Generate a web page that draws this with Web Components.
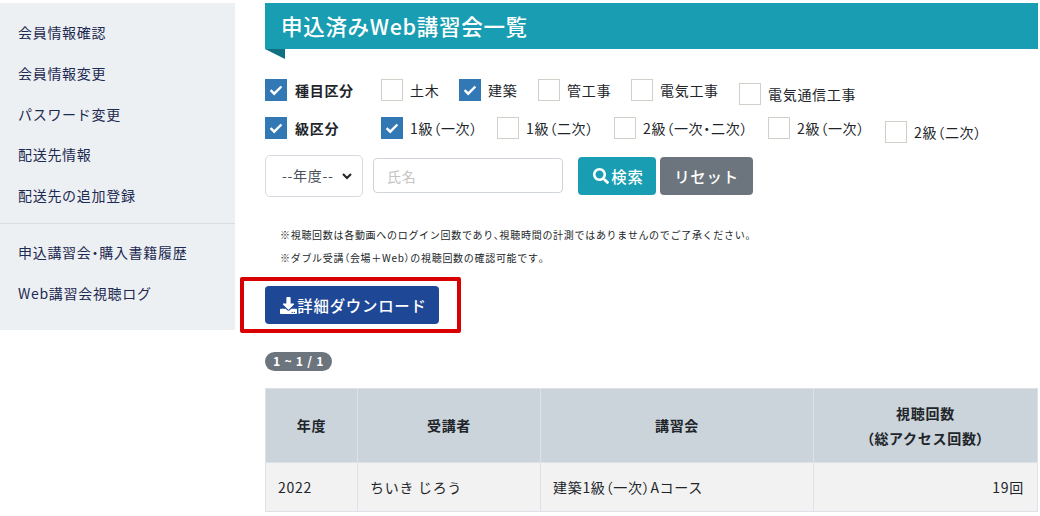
<!DOCTYPE html>
<html lang="ja">
<head>
<meta charset="utf-8">
<title>申込済みWeb講習会一覧</title>
<style>
  html, body { margin: 0; padding: 0; background: #fff; overflow: hidden; }
  body {
    font-family: "Noto Sans CJK JP", "Noto Sans", sans-serif;
    font-size: 14px;
    letter-spacing: 0.05em;
    color: #212529;
  }
</style>
</head>
<body>
<app-shell>
  <side-nav slot="side">
    <nav-link>会員情報確認</nav-link>
    <nav-link>会員情報変更</nav-link>
    <nav-link>パスワード変更</nav-link>
    <nav-link>配送先情報</nav-link>
    <nav-link>配送先の追加登録</nav-link>
    <nav-link divider>申込講習会・購入書籍履歴</nav-link>
    <nav-link>Web講習会視聴ログ</nav-link>
  </side-nav>

  <title-banner>申込済みWeb講習会一覧</title-banner>

  <check-row>
    <check-item width="116" checked bold>種目区分</check-item>
    <check-item width="78">土木</check-item>
    <check-item width="79" checked>建築</check-item>
    <check-item width="93">管工事</check-item>
    <check-item width="108">電気工事</check-item>
    <check-item low>電気通信工事</check-item>
  </check-row>
  <check-row>
    <check-item width="116" checked bold>級区分</check-item>
    <check-item width="116" checked>1級（一次）</check-item>
    <check-item width="117">1級（二次）</check-item>
    <check-item width="154">2級（一次・二次）</check-item>
    <check-item width="117">2級（一次）</check-item>
    <check-item low>2級（二次）</check-item>
  </check-row>

  <search-bar></search-bar>

  <note-list>
    <p>※視聴回数は各動画へのログイン回数であり、視聴時間の計測ではありませんのでご了承ください。</p>
    <p>※ダブル受講（会場＋Web）の視聴回数の確認可能です。</p>
  </note-list>

  <download-button>詳細ダウンロード</download-button>

  <count-badge>1 ~ 1 / 1</count-badge>

  <log-table></log-table>
</app-shell>

<script>
// only the punctuation is set tight, kana and kanji keep their full width
const tight = (s) => s.replace(/[（）・、。]/g, `<span style="font-feature-settings:'palt'">$&</span>`);

class AppShell extends HTMLElement {
  constructor() {
    super();
    this.attachShadow({ mode: 'open' });
    this.shadowRoot.innerHTML = `
      <style>
        :host { display: flex; align-items: flex-start; width: 1040px; padding-top: 3px; box-sizing: border-box; }
        .side { flex: 0 0 235px; }
        main { flex: 0 0 773px; margin-left: 30px; min-width: 0; }
      </style>
      <div class="side"><slot name="side"></slot></div>
      <main><slot></slot></main>
    `;
  }
}

class SideNav extends HTMLElement {
  constructor() {
    super();
    this.attachShadow({ mode: 'open' });
    this.shadowRoot.innerHTML = `
      <style>
        :host { display: block; height: 327px; padding-top: 9.6px; box-sizing: border-box; background: #edf0f3; }
      </style>
      <slot></slot>
    `;
  }
}

class NavLink extends HTMLElement {
  constructor() {
    super();
    this.attachShadow({ mode: 'open' });
    this.shadowRoot.innerHTML = `
      <style>
        :host { display: block; padding: 9.8px 18px; line-height: 21px; color: #1d2a52; }
        :host([divider]) { margin-top: 7px; padding-top: 18.6px; border-top: 1px solid #d8dde2; }
      </style>
      <slot></slot>
    `;
  }
}

class TitleBanner extends HTMLElement {
  constructor() {
    super();
    this.attachShadow({ mode: 'open' });
    this.shadowRoot.innerHTML = `
      <style>
        :host { display: block; position: relative; height: 46px; padding-left: 16px; margin-bottom: 30px; background: #189db2; color: #fff; font-size: 21.5px; font-weight: 500; line-height: 46px; }
        .tail { position: absolute; left: 0; top: 100%; width: 0; height: 0; border-top: 10px solid #11707f; border-left: 20px solid transparent; }
      </style>
      <slot></slot><span class="tail"></span>
    `;
  }
}

class CheckRow extends HTMLElement {
  constructor() {
    super();
    this.attachShadow({ mode: 'open' });
    this.shadowRoot.innerHTML = `
      <style>
        :host { display: flex; align-items: flex-start; height: 26px; margin-bottom: 12px; }
      </style>
      <slot></slot>
    `;
  }
}

class CheckItem extends HTMLElement {
  constructor() {
    super();
    this.attachShadow({ mode: 'open' });
    const checked = this.hasAttribute('checked');
    this.shadowRoot.innerHTML = `
      <style>
        :host { display: flex; align-items: center; flex: none; gap: 7px; height: 22px; line-height: 22px; white-space: nowrap; }
        :host([bold]) { font-weight: 700; gap: 8px; }
        :host([low]) { margin-top: 4px; }
        .box { flex: none; width: 22px; height: 22px; box-sizing: border-box; border: 1px solid #d2cec8; background: #fff; }
        .box.on { border-color: #3278b4; background: #3278b4; }
        svg { display: block; width: 20px; height: 20px; }
      </style>
      <span class="box ${checked ? 'on' : ''}">
        ${checked ? '<svg viewBox="0 0 20 20"><path d="M4.6 10.2l3.6 3.5 7.2-7.2" fill="none" stroke="#fff" stroke-width="2.4"/></svg>' : ''}
      </span>
      <span><slot></slot></span>
    `;
    if (this.getAttribute('width')) this.style.width = this.getAttribute('width') + 'px';
  }
}

class SearchBar extends HTMLElement {
  constructor() {
    super();
    this.attachShadow({ mode: 'open' });
    this.shadowRoot.innerHTML = `
      <style>
        :host { display: flex; align-items: flex-start; margin-bottom: 30px; font-size: 14px; }
        .pick { position: relative; display: block; width: 98px; height: 42px; }
        .pick svg { position: absolute; right: 9px; top: 16px; width: 14px; height: 10px; fill: none; stroke: #212529; stroke-width: 2.1; pointer-events: none; }
        select {
          appearance: none; display: block;
          width: 98px; height: 42px; padding: 0 6px 2px 16px; box-sizing: border-box;
          border: 1px solid #d5dae0; border-radius: 5px; background: #fff; color: #495057;
          font: inherit; letter-spacing: 0.05em;
        }
        input {
          width: 190px; height: 35px; margin: 3px 0 0 10px; padding: 0 13px; box-sizing: border-box;
          border: 1px solid #ced4da; border-radius: 4px; background: #fff;
          font: inherit; letter-spacing: 0.05em;
        }
        input::placeholder { color: #c4c4c4; opacity: 1; }
        button {
          display: flex; align-items: center; justify-content: center; gap: 2px;
          height: 38px; margin-top: 2px; padding: 0; border: 0; border-radius: 4px; color: #fff;
          font: 500 15.4px "Noto Sans CJK JP", "Noto Sans", sans-serif; letter-spacing: 0.05em;
        }
        .search { width: 78px; margin-left: 15px; padding-left: 3px; background: #189db2; }
        .reset { width: 93px; margin-left: 4px; background: #6c757d; }
        button svg { width: 16px; height: 16px; fill: #fff; }
      </style>
      <span class="pick">
        <select><option>--年度--</option></select>
        <svg viewBox="0 0 14 10"><path d="M3 3l4 4 4-4"/></svg>
      </span>
      <input type="text" placeholder="氏名">
      <button class="search" type="button">
        <svg viewBox="0 0 512 512"><path d="M505 442.7L405.3 343c-4.5-4.5-10.6-7-17-7H372c27.6-35.3 44-79.7 44-128C416 93.1 322.9 0 208 0S0 93.1 0 208s93.1 208 208 208c48.3 0 92.7-16.4 128-44v16.3c0 6.4 2.5 12.5 7 17l99.7 99.7c9.4 9.4 24.6 9.4 33.9 0l28.3-28.3c9.4-9.4 9.4-24.6.1-34zM208 336c-70.7 0-128-57.2-128-128 0-70.7 57.2-128 128-128 70.7 0 128 57.2 128 128 0 70.7-57.2 128-128 128z"/></svg>検索
      </button>
      <button class="reset" type="button">リセット</button>
    `;
  }
}

class NoteList extends HTMLElement {
  constructor() {
    super();
    this.attachShadow({ mode: 'open' });
    this.shadowRoot.innerHTML = `
      <style>
        :host { display: block; margin-bottom: 21px; padding-left: 15px; font-size: 10px; line-height: 15px; }
        ::slotted(p) { margin: 0 0 8px; }
        ::slotted(p:last-child) { margin-bottom: 0; }
      </style>
      <slot></slot>
    `;
  }
}

class DownloadButton extends HTMLElement {
  constructor() {
    super();
    this.attachShadow({ mode: 'open' });
    this.shadowRoot.innerHTML = `
      <style>
        :host { display: block; position: relative; width: 174px; margin-bottom: 28px; }
        button {
          display: flex; align-items: center; justify-content: center; gap: 0;
          width: 174px; height: 38px; padding: 0 0 0 3px; border: 0; border-radius: 4px;
          background: #1e4796; color: #fff;
          font: 500 15.4px "Noto Sans CJK JP", "Noto Sans", sans-serif; letter-spacing: 0.05em;
        }
        svg { width: 17px; height: 17px; fill: #fff; }
        .mark { position: absolute; left: -25px; top: -9px; width: 221px; height: 56px; box-sizing: border-box; border: 4px solid #d80000; border-radius: 2px; pointer-events: none; }
      </style>
      <button type="button">
        <svg viewBox="0 0 512 512"><path d="M216 0h80c13.3 0 24 10.7 24 24v168h87.7c17.8 0 26.7 21.5 14.1 34.1L269.7 378.3c-7.5 7.5-19.8 7.5-27.3 0L90.1 226.1c-12.6-12.6-3.7-34.1 14.1-34.1H192V24c0-13.3 10.7-24 24-24zm296 376v112c0 13.3-10.7 24-24 24H24c-13.3 0-24-10.7-24-24V376c0-13.3 10.7-24 24-24h146.7l49 49c20.1 20.1 52.5 20.1 72.6 0l49-49H488c13.3 0 24 10.7 24 24zm-124 88c0-11-9-20-20-20s-20 9-20 20 9 20 20 20 20-9 20-20zm64 0c0-11-9-20-20-20s-20 9-20 20 9 20 20 20 20-9 20-20z"/></svg>
        <slot></slot>
      </button>
      <span class="mark"></span>
    `;
  }
}

class CountBadge extends HTMLElement {
  constructor() {
    super();
    this.attachShadow({ mode: 'open' });
    this.shadowRoot.innerHTML = `
      <style>
        :host { display: block; width: fit-content; height: 19px; margin-bottom: 17px; padding: 0 8px; border-radius: 10px; background: #6c757d; color: #fff; font-size: 12.25px; font-weight: 700; line-height: 19px; white-space: nowrap; }
      </style>
      <slot></slot>
    `;
  }
}

class LogTable extends HTMLElement {
  constructor() {
    super();
    this.attachShadow({ mode: 'open' });
    this.shadowRoot.innerHTML = `
      <style>
        :host { display: block; }
        table { width: 773px; table-layout: fixed; border-collapse: collapse; }
        th, td { border: 1px solid #dee2e6; padding: 0 13px; }
        th { height: 73px; background: #cbd3db; font-weight: 700; line-height: 25px; text-align: center; }
        td { height: 49px; padding: 0 13px 1px 12px; box-sizing: border-box; background: #f2f2f2; line-height: 24px; }
        .num { text-align: right; }
      </style>
      <table>
        <colgroup><col style="width:92px"><col style="width:183px"><col style="width:273px"><col></colgroup>
        <thead>
          <tr><th>年度</th><th>受講者</th><th>講習会</th><th>視聴回数<br>${tight('（総アクセス回数）')}</th></tr>
        </thead>
        <tbody>
          <tr><td>2022</td><td>ちいき じろう</td><td>${tight('建築1級（一次）Aコース')}</td><td class="num">19回</td></tr>
        </tbody>
      </table>
    `;
  }
}

document.querySelectorAll('nav-link, check-item, note-list p').forEach((el) => {
  el.innerHTML = tight(el.innerHTML);
});

customElements.define('app-shell', AppShell);
customElements.define('side-nav', SideNav);
customElements.define('nav-link', NavLink);
customElements.define('title-banner', TitleBanner);
customElements.define('check-row', CheckRow);
customElements.define('check-item', CheckItem);
customElements.define('search-bar', SearchBar);
customElements.define('note-list', NoteList);
customElements.define('download-button', DownloadButton);
customElements.define('count-badge', CountBadge);
customElements.define('log-table', LogTable);
</script>
</body>
</html>
